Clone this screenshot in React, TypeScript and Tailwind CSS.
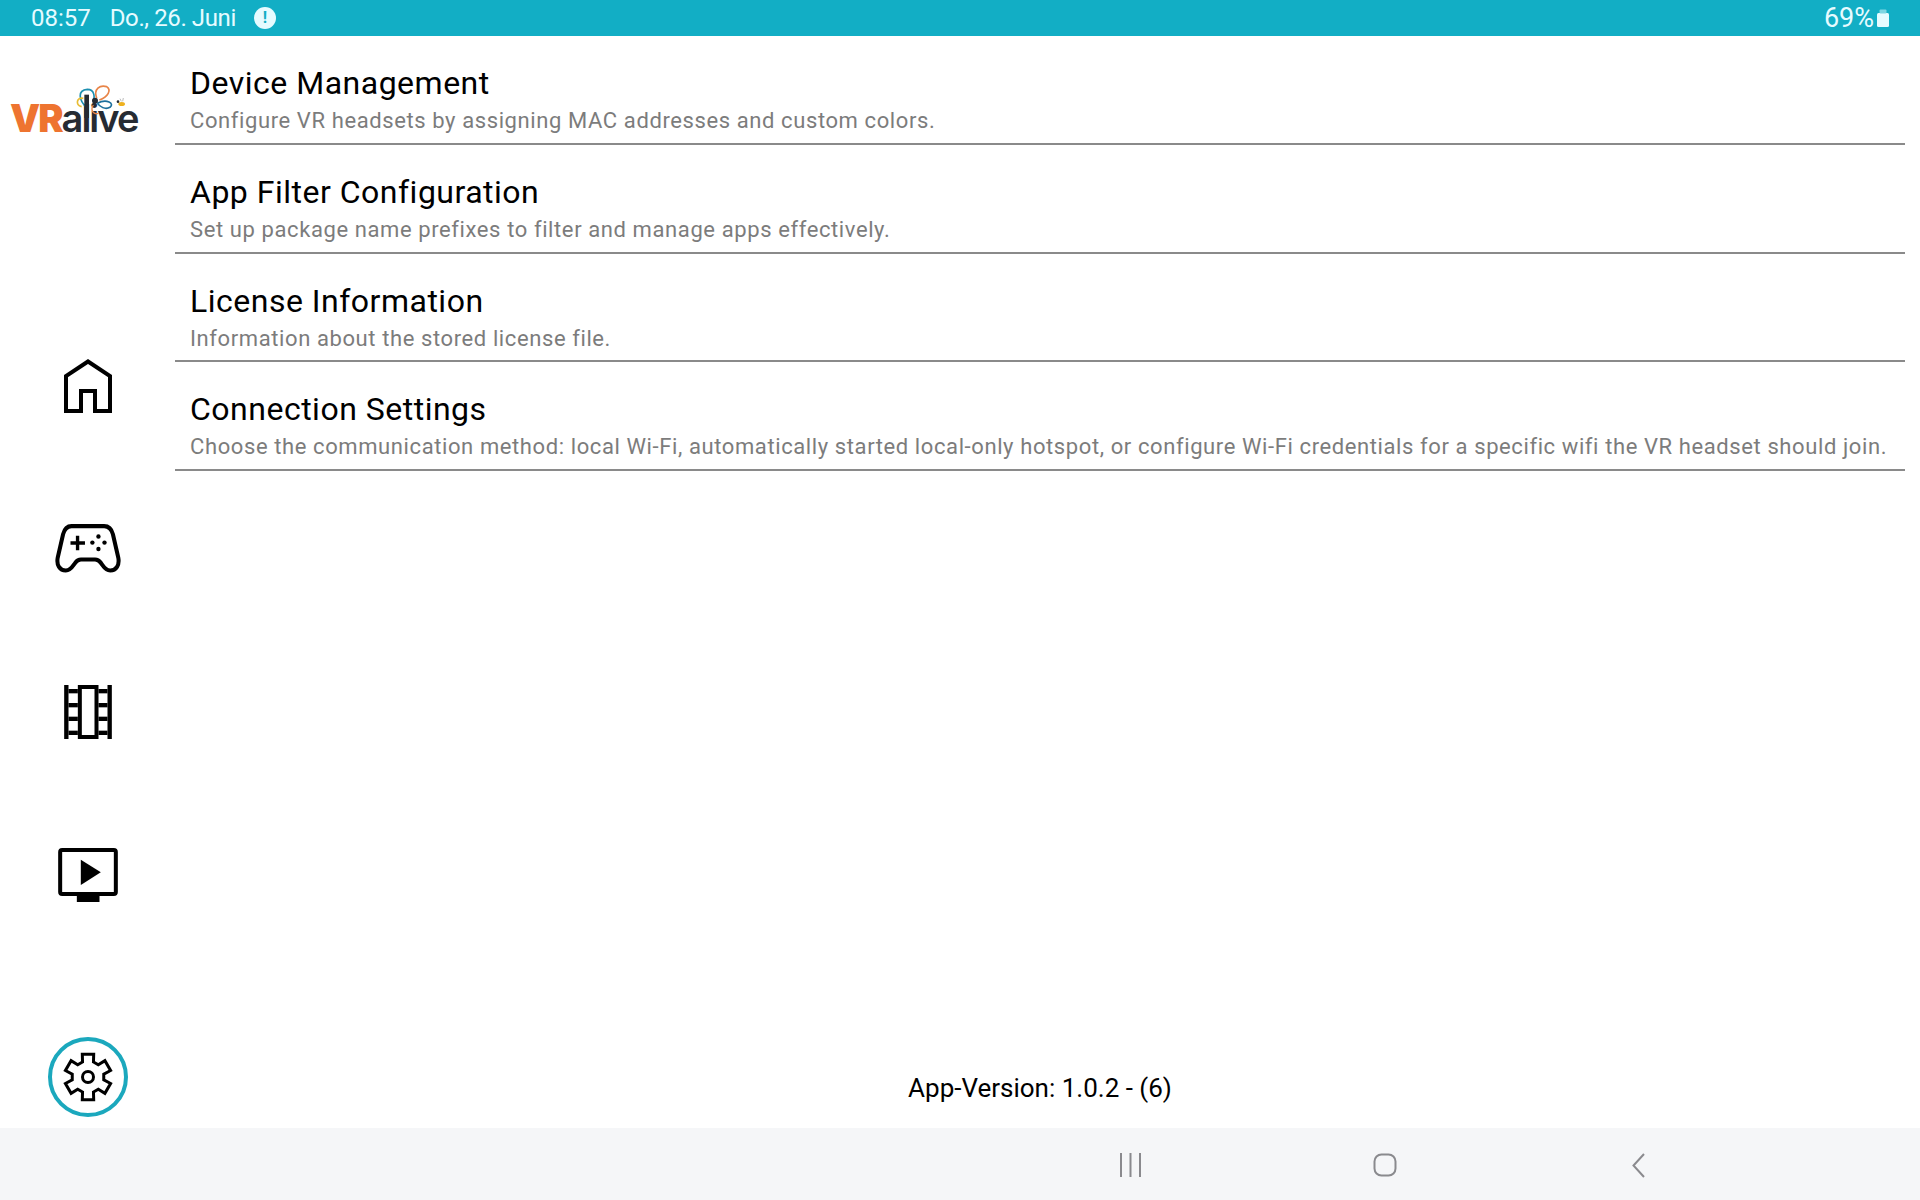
const rows = [
  ["Device Management", "Configure VR headsets by assigning MAC addresses and custom colors."],
  ["App Filter Configuration", "Set up package name prefixes to filter and manage apps effectively."],
  ["License Information", "Information about the stored license file."],
  ["Connection Settings", "Choose the communication method: local Wi-Fi, automatically started local-only hotspot, or configure Wi-Fi credentials for a specific wifi the VR headset should join."],
];

function gearPath(cx: number, cy: number) {
  const pts: string[] = [];
  const p = (r: number, a: number) => {
    const t = (a * Math.PI) / 180;
    return `${(cx + r * Math.cos(t)).toFixed(2)} ${(cy + r * Math.sin(t)).toFixed(2)}`;
  };
  for (let i = 0; i < 6; i++) {
    const c = -90 + i * 60;
    pts.push(p(16, c - 20), p(23.5, c - 14), p(23.5, c + 14), p(16, c + 20));
  }
  return "M" + pts.join("L") + "Z";
}

function Logo() {
  return (
    <div className="relative h-[70px] w-[175px]">
      <div className="absolute left-[10px] top-[22px] flex items-baseline whitespace-nowrap font-['Inter',sans-serif] text-[38px] leading-[48px] tracking-[-2px]">
        <span className="font-black text-[#ee7430]">VR</span>
        <span className="font-semibold text-[#262b33]">alive</span>
      </div>
      <svg className="absolute left-[70px] top-[8px]" width="64" height="50" viewBox="210 240 192 150" fill="none">
        <path d="M262 325 C235 300 232 270 262 268 C285 268 285 295 278 303" stroke="#1c8fb0" strokeWidth="5" />
        <path d="M290 295 C280 265 300 255 320 260 C335 270 325 290 298 300" stroke="#e88447" strokeWidth="5" />
        <path d="M292 310 C320 295 345 310 330 322 C315 330 300 320 292 310" stroke="#1c6f9c" strokeWidth="5" />
        <path d="M280 315 C270 330 280 345 295 340" stroke="#e88447" strokeWidth="4" />
        <path d="M250 295 C230 290 225 315 245 320" stroke="#e8bd35" strokeWidth="5" />
        <rect x="253" y="284" width="14" height="70" fill="#262b33" />
        <circle cx="285" cy="302" r="9" fill="#262b33" />
        <ellipse cx="365" cy="312" rx="10" ry="6" fill="#eeb11f" />
        <circle cx="354" cy="305" r="4" fill="#262b33" />
        <path d="M360 296 L364 304 M370 294 L368 304" stroke="#999" strokeWidth="2" />
      </svg>
    </div>
  );
}

function Sidebar() {
  return (
    <div className="flex w-[175px] shrink-0 flex-col items-center">
      <div className="mt-[36px]"><Logo /></div>
      <svg className="mt-[217px]" width="48" height="54" viewBox="0 0 48 54" fill="none" stroke="#000" strokeWidth="4">
        <path d="M2 52V17L24 2.5L46 17V52H31V32H17V52Z" />
      </svg>
      <svg className="mt-[111px]" width="66" height="49" viewBox="76 550 196 145" fill="none" stroke="#000" strokeWidth="12" strokeLinejoin="round">
        <path d="M125 556H222C236 556 244 565 248 580L264 650C268 672 258 688 240 688C226 688 220 676 212 665C207 658 202 655 195 655H153C146 655 141 658 136 665C128 676 122 688 108 688C90 688 80 672 84 650L100 580C104 565 111 556 125 556Z" />
        <path d="M122 606H165M143 585V628" strokeWidth="10" />
        <g fill="#000" stroke="none">
          <circle cx="205" cy="587" r="6.5" /><circle cx="187" cy="605" r="6.5" /><circle cx="223" cy="605" r="6.5" /><circle cx="205" cy="624" r="6.5" />
        </g>
      </svg>
      <svg className="mt-[112px]" width="48" height="54" viewBox="102 75 143 162" fill="#000">
        <rect x="102" y="75" width="13" height="162" />
        <rect x="232" y="75" width="13" height="162" />
        <path fillRule="evenodd" d="M143 75H205V237H143ZM155 87V225H193V87Z" />
        <rect x="115" y="87" width="28" height="13" /><rect x="205" y="87" width="27" height="13" />
        <rect x="115" y="129" width="28" height="13" /><rect x="205" y="129" width="27" height="13" />
        <rect x="115" y="170" width="28" height="13" /><rect x="205" y="170" width="27" height="13" />
        <rect x="115" y="212" width="28" height="13" /><rect x="205" y="212" width="27" height="13" />
      </svg>
      <svg className="mt-[109px]" width="60" height="54" viewBox="84 563 179 162" fill="#000">
        <rect x="90" y="569" width="167" height="132" rx="6" fill="none" stroke="#000" strokeWidth="12" />
        <path d="M152 598L212 636L152 674Z" />
        <rect x="140" y="705" width="68" height="20" />
      </svg>
      <div className="mt-[135px] flex h-[80px] w-[80px] items-center justify-center rounded-full border-[4px] border-[#1ba8bd]">
        <svg width="52" height="52" viewBox="0 0 52 52" fill="none" stroke="#000" strokeWidth="3" strokeLinejoin="miter">
          <path d={gearPath(26, 26)} />
          <circle cx="26" cy="26" r="5.5" />
        </svg>
      </div>
    </div>
  );
}

export default function App() {
  return (
    <div className="flex h-[1200px] w-[1920px] flex-col overflow-hidden bg-white font-['Roboto',sans-serif]">
      <div className="flex h-[36px] shrink-0 items-center justify-between bg-[#12aec5] pl-[31px] pr-[31px] text-[24px] leading-[36px] text-[#e6fbff]">
        <div className="flex items-center">
          <span>08:57</span>
          <span className="ml-[19px] tracking-[-0.4px]">Do., 26. Juni</span>
          <span className="ml-[18px] flex h-[22px] w-[22px] items-center justify-center rounded-full bg-[#e6fbff] text-[16px] font-bold leading-none text-[#12aec5]">!</span>
        </div>
        <div className="flex items-center gap-[3px]">
          <span className="text-[27px]">69%</span>
          <svg width="12" height="18" viewBox="0 0 12 18"><rect x="0" y="4" width="12" height="14" rx="1.5" fill="#e6fbff" /><rect x="2.5" y="0.5" width="7" height="4" rx="1" fill="#7fd6e2" /></svg>
        </div>
      </div>
      <div className="flex min-h-0 flex-1">
        <Sidebar />
        <div className="flex min-w-0 flex-1 flex-col pr-[15px]">
          {rows.map(([title, sub]) => (
            <div key={title} className="flex h-[108.75px] shrink-0 flex-col border-b-2 border-[#8a8a8a] pl-[15px] pt-[28px]">
              <div className="text-[32px] leading-[38px] tracking-[0.5px] text-black">{title}</div>
              <div className="mt-[3px] whitespace-nowrap text-[22px] leading-[32px] tracking-[0.6px] text-[#7c7c7c]">{sub}</div>
            </div>
          ))}
          <div className="mt-auto mb-[25px] text-center text-[26px] leading-[30px] text-black">App-Version: 1.0.2 - (6)</div>
        </div>
      </div>
      <div className="flex h-[72px] shrink-0 items-center bg-[#f5f6f8] pl-[1120px] pt-[2px]">
        <svg width="21" height="24" viewBox="0 0 21 24" stroke="#8a8a8e" strokeWidth="2"><path d="M1 0V24M10.5 0V24M20 0V24" /></svg>
        <svg className="ml-[232px]" width="24" height="24" viewBox="0 0 24 24" fill="none" stroke="#8a8a8e" strokeWidth="2"><rect x="1.5" y="1.5" width="21" height="21" rx="7" /></svg>
        <svg className="ml-[235px]" width="13" height="25" viewBox="0 0 13 25" fill="none" stroke="#8a8a8e" strokeWidth="2"><path d="M12 1L1.5 12.5L12 24" /></svg>
      </div>
    </div>
  );
}
